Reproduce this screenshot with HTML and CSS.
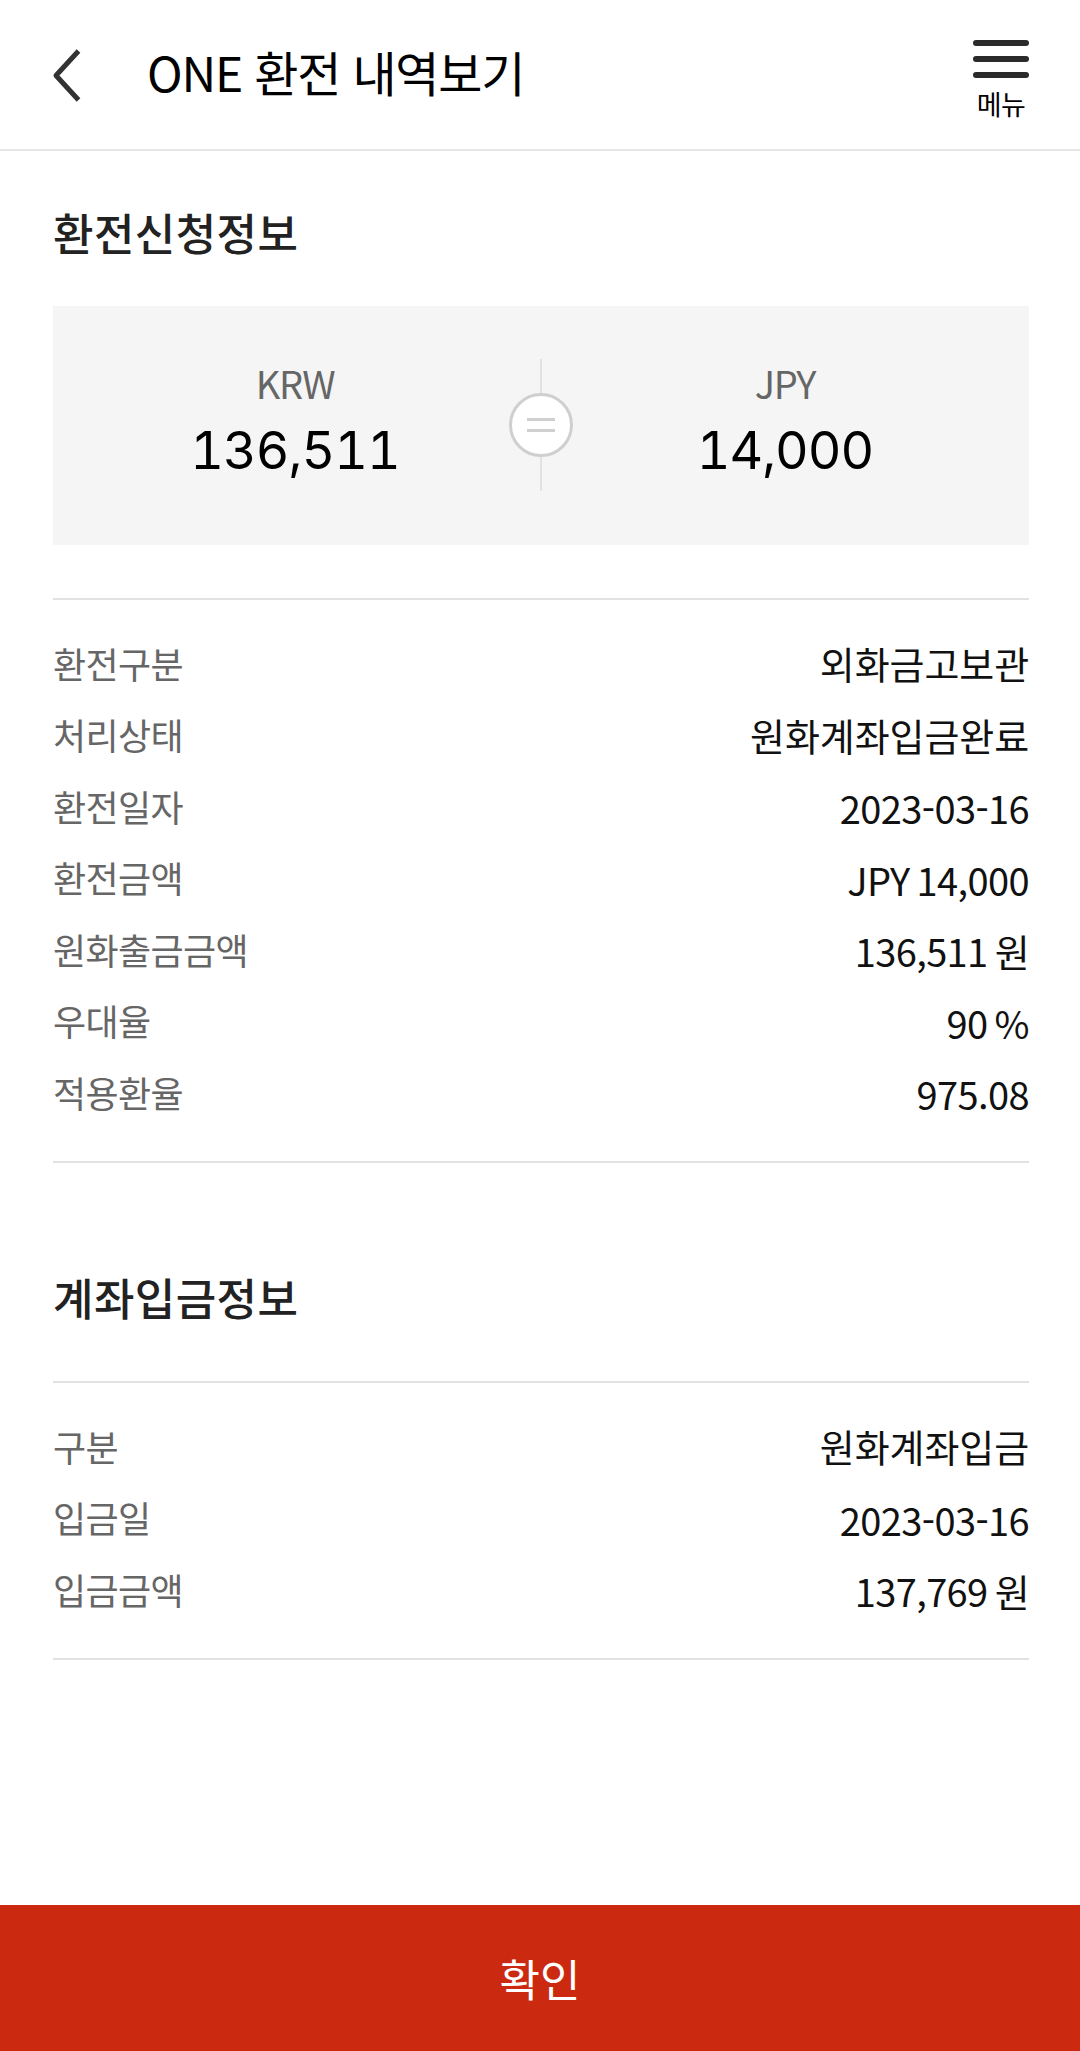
FILE: index.html
```html
<!DOCTYPE html>
<html lang="ko">
<head>
    <meta charset="UTF-8">
    <meta name="viewport" content="width=device-width, initial-scale=1.0">
    <title>ONE 환전 내역보기</title>
    <link rel="stylesheet" href="styles.css">
</head>
<body>

    <header class="top-bar">
        <svg class="back-icon" width="30" height="54" viewBox="0 0 30 54">
            <path d="M27.5 3 L5 27.5 L27.5 52" fill="none" stroke="#333" stroke-width="5" stroke-linejoin="round"/>
        </svg>
        <h1 class="page-title">ONE 환전 내역보기</h1>
        <div class="menu-btn">
            <div class="menu-lines"><span></span><span></span><span></span></div>
            <div class="menu-label">메뉴</div>
        </div>
    </header>

    <main class="content">
        <h2 class="section-title">환전신청정보</h2>

        <div class="exchange-box">
            <div class="currency currency-from">
                <div class="currency-code">KRW</div>
                <div class="currency-amount">136,511</div>
            </div>
            <div class="currency">
                <div class="currency-code">JPY</div>
                <div class="currency-amount">14,000</div>
            </div>
            <div class="equals">
                <div class="equals-line"></div>
                <div class="equals-circle"><span></span><span></span></div>
                <div class="equals-line"></div>
            </div>
        </div>

        <dl class="info-list info-first">
            <div class="info-row"><dt>환전구분</dt><dd class="val-text">외화금고보관</dd></div>
            <div class="info-row"><dt>처리상태</dt><dd class="val-text">원화계좌입금완료</dd></div>
            <div class="info-row"><dt>환전일자</dt><dd class="val-num">2023-03-16</dd></div>
            <div class="info-row"><dt>환전금액</dt><dd class="val-num">JPY 14,000</dd></div>
            <div class="info-row"><dt>원화출금금액</dt><dd class="val-num">136,511 원</dd></div>
            <div class="info-row"><dt>우대율</dt><dd class="val-num">90 %</dd></div>
            <div class="info-row"><dt>적용환율</dt><dd class="val-num">975.08</dd></div>
        </dl>

        <h2 class="section-title section-second">계좌입금정보</h2>

        <dl class="info-list info-second">
            <div class="info-row"><dt>구분</dt><dd class="val-text">원화계좌입금</dd></div>
            <div class="info-row"><dt>입금일</dt><dd class="val-num">2023-03-16</dd></div>
            <div class="info-row"><dt>입금금액</dt><dd class="val-num">137,769 원</dd></div>
        </dl>
    </main>

    <button class="confirm-btn">확인</button>

</body>
</html>
```

FILE: styles.css
```css
html, body {
    margin: 0;
    padding: 0;
}
body {
    width: 1080px;
    height: 2051px;
    display: flex;
    flex-direction: column;
    font-family: "Noto Sans CJK KR", "Noto Sans", sans-serif;
    background-color: #fff;
    color: #000;
    overflow: hidden;
}
.top-bar {
    height: 149px;
    flex: none;
    display: flex;
    align-items: center;
    padding: 0 50px 0 51px;
    border-bottom: 2px solid #e6e6e6;
}
.back-icon {
    flex: none;
}
.page-title {
    flex: 1;
    margin: -7px 0 0 66px;
    font-size: 48px;
    font-weight: 400;
    letter-spacing: -1.2px;
    line-height: 70px;
}
.menu-btn {
    align-self: flex-start;
    width: 58px;
    padding-top: 40px;
    display: flex;
    flex-direction: column;
    align-items: center;
}
.menu-lines {
    display: flex;
    flex-direction: column;
    gap: 10px;
    width: 56px;
}
.menu-lines span {
    height: 6px;
    border-radius: 3px;
    background-color: #2b2b2b;
}
.menu-label {
    font-size: 27px;
    line-height: 36px;
    letter-spacing: -0.6px;
    margin-top: 8px;
}
.content {
    flex: 1;
    padding: 0 51px 0 53px;
}
.section-title {
    margin: 0;
    padding-top: 51px;
    height: 155px;
    box-sizing: border-box;
    font-size: 44px;
    font-weight: 500;
    line-height: 60px;
    letter-spacing: 0.4px;
    color: #222;
}
.section-second {
    padding-top: 104px;
    height: 218px;
}
.exchange-box {
    position: relative;
    height: 239px;
    display: grid;
    grid-template-columns: 1fr 1fr;
    align-items: center;
    background-color: #f5f5f5;
}
.currency {
    text-align: center;
}
.currency-from {
    padding-right: 4px;
}
.currency-code {
    font-size: 38px;
    line-height: 50px;
    color: #666;
    letter-spacing: -1.2px;
    margin-top: -5px;
}
.currency-amount {
    font-family: Inter, Roboto, sans-serif;
    font-variant-numeric: tabular-nums;
    font-size: 52px;
    letter-spacing: -1px;
    line-height: 76px;
    margin-top: 5px;
}
.equals {
    position: absolute;
    left: 50%;
    top: 53px;
    width: 64px;
    margin-left: -32px;
    display: flex;
    flex-direction: column;
    align-items: center;
}
.equals-line {
    width: 2px;
    height: 34px;
    background-color: #e2e2e2;
}
.equals-circle {
    box-sizing: border-box;
    width: 64px;
    height: 64px;
    border: 3px solid #cfcfcf;
    border-radius: 50%;
    background-color: #fff;
    display: flex;
    flex-direction: column;
    align-items: center;
    justify-content: center;
    gap: 8px;
}
.equals-circle span {
    width: 28px;
    height: 3px;
    background-color: #cfcfcf;
}
.info-list {
    margin: 0;
    padding: 27px 0 33.3px;
    border-top: 2px solid #e2e2e2;
    border-bottom: 2px solid #e2e2e2;
}
.info-first {
    margin-top: 53px;
}
.info-row {
    height: 71.5px;
    display: flex;
    justify-content: space-between;
    align-items: center;
}
.info-row dt {
    font-size: 36px;
    letter-spacing: -0.6px;
    color: #666;
}
.info-row dd {
    margin: 0;
    font-size: 38px;
    color: #111;
}
.val-text {
    letter-spacing: -0.1px;
}
.val-num {
    letter-spacing: -0.6px;
    word-spacing: -3px;
    padding-top: 4px;
}
.confirm-btn {
    flex: none;
    height: 146px;
    border: 0;
    padding: 0;
    background-color: #cb2a10;
    color: #fff;
    font-family: inherit;
    font-size: 44px;
}
```
